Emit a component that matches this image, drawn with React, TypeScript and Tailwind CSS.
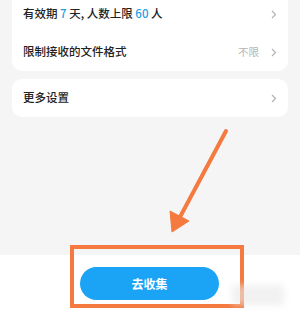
import React from "react";

function Chevron() {
  return (
    <svg width="6" height="9" viewBox="0 0 6 9" className="shrink-0">
      <path d="M1 1l3.5 3.5L1 8" fill="none" stroke="#b3b3b3" strokeWidth="1.2" />
    </svg>
  );
}

export default function App() {
  return (
    <div
      className="relative w-[300px] h-[312px] overflow-hidden bg-[#f5f5f5] flex flex-col"
      style={{ fontFamily: '"Noto Sans CJK SC", "Noto Sans", sans-serif' }}
    >
      <div className="flex-1 px-[12px]">
        {/* 第一张卡片 (顶部被截掉) */}
        <div className="-mt-[5px] bg-white rounded-b-[10px] pl-[11px] pr-[11px]">
          <div className="h-[38px] flex items-center justify-between">
            <span className="text-[11.5px] text-[#222] font-medium">
              有效期 <span className="text-[#1a9fe0]">7</span> 天, 人数上限{" "}
              <span className="text-[#1a9fe0]">60</span> 人
            </span>
            <Chevron />
          </div>
          <div className="h-[38px] flex items-center justify-between">
            <span className="text-[11.5px] text-[#222] font-medium">限制接收的文件格式</span>
            <div className="flex items-center gap-[12px]">
              <span className="text-[10.5px] text-[#b5b5b5]">不限</span>
              <Chevron />
            </div>
          </div>
        </div>

        <div className="mt-[8px] bg-white rounded-[10px] pl-[11px] pr-[11px] h-[38px] flex items-center justify-between">
          <span className="text-[11.5px] text-[#222] font-medium">更多设置</span>
          <Chevron />
        </div>
      </div>

      {/* 底部按钮区 */}
      <div className="h-[57px] bg-white flex justify-center pt-[12px]">
        <button className="w-[139px] h-[33px] rounded-full bg-[#1ba3f5] text-white text-[12px] font-bold ml-[-1px]">
          去收集
        </button>
      </div>

      {/* 标注：橙色框 */}
      <div className="absolute left-[70px] top-[245px] w-[174px] h-[63px] border-[4px] border-[#f47a40]" />

      {/* 标注：箭头 */}
      <svg className="absolute left-0 top-0 pointer-events-none" width="300" height="312" viewBox="0 0 300 312">
        <path d="M226 131 L180 217" stroke="#f47a40" strokeWidth="4" strokeLinecap="round" fill="none" />
        <path d="M172 232 L170 211 L189 221 Z" fill="#f47a40" stroke="#f47a40" strokeWidth="1" strokeLinejoin="round" />
      </svg>

      {/* 模糊水印 */}
      <div className="absolute left-[232px] top-[285px] w-[52px] h-[20px] bg-[#e8e8e8] opacity-60 blur-[3px]" />
    </div>
  );
}
